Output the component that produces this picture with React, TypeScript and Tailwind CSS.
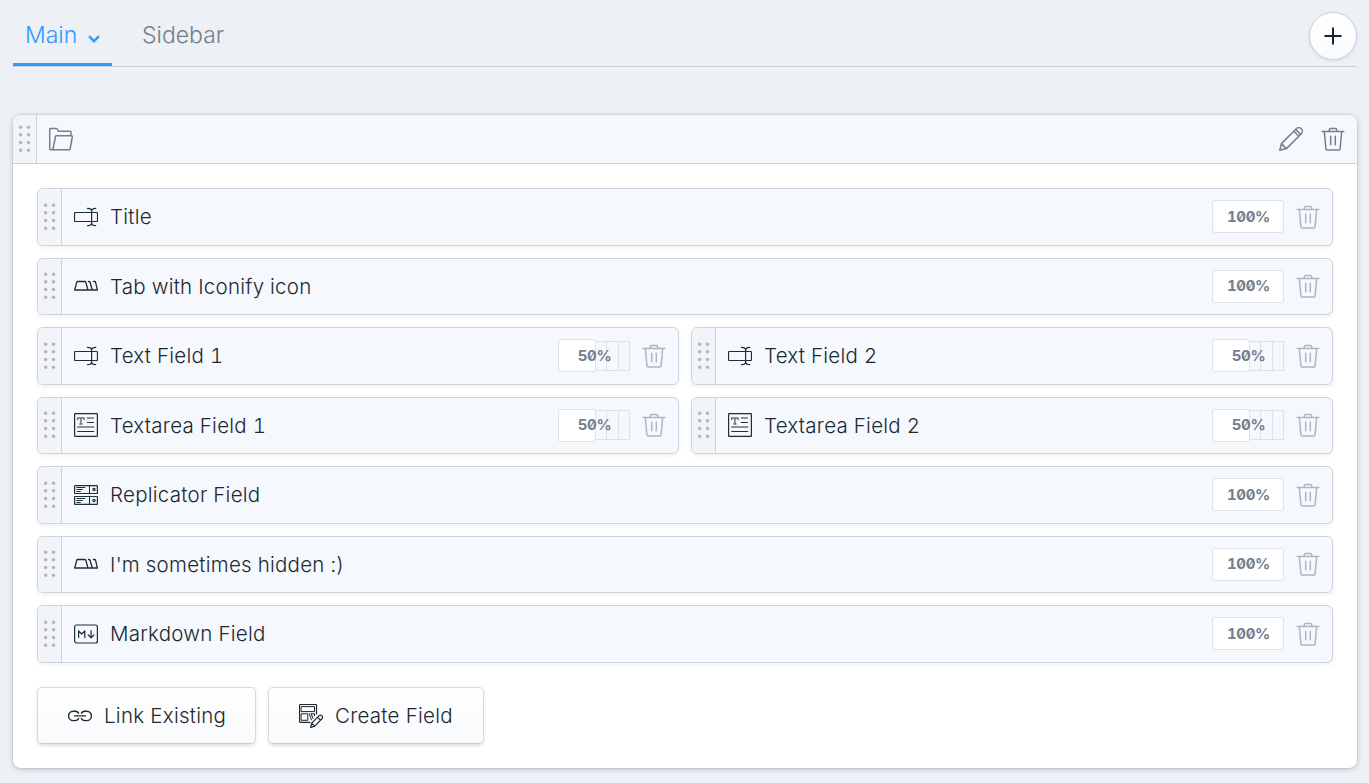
import React from 'react';

type IconProps = { className?: string; children: React.ReactNode };

function Icon({ className = '', children }: IconProps) {
  return (
    <svg
      viewBox="0 0 24 24"
      fill="none"
      stroke="currentColor"
      strokeWidth="1.2"
      strokeLinecap="round"
      strokeLinejoin="round"
      className={`size-6 shrink-0 ${className}`}
    >
      {children}
    </svg>
  );
}

const TextIcon = () => (
  <Icon>
    <path d="M16 16.5H1.5a1 1 0 0 1-1-1v-7a1 1 0 0 1 1-1h21a1 1 0 0 1 1 1v7a1 1 0 0 1-1 1H16M17.6 5.6v12.8" />
    <path d="M13.5 3.4c2.500 0 4.100.8 4.100 2.600 0-1.800 1.600-2.600 4.100-2.600M13.500 20.600c2.500 0 4.100-.8 4.100-2.600 0 1.800 1.600 2.600 4.100 2.600" />
  </Icon>
);

const TabIcon = () => (
  <Icon>
    <path
      strokeWidth="1.300"
      d="M.7 16h22.700L21.600 8.300a1 1 0 0 0-1-.8h-1.200M.7 16 2.700 8.300a1 1 0 0 1 1-.8h7.100a1 1 0 0 1 1 .8l2.200 7.700M14.500 7.500h.5a1 1 0 0 1 1 .8l2.300 7.700"
    />
  </Icon>
);

const TextareaIcon = () => (
  <Icon>
    <rect x=".6" y=".6" width="22.8" height="22.8" rx=".6" />
    <g strokeWidth="1.2">
      <path d="M3.700 6.500V5H10v1.500M6.900 5v6M5.800 11H8M13.400 5h6M3.700 14h16" strokeWidth="1.500" opacity=".65" />
      <path d="M13.400 9.500h6M3.700 18.500h16" />
    </g>
  </Icon>
);

const ReplicatorIcon = () => (
  <Icon>
    <rect x=".6" y="2.600" width="22.800" height="7.900" rx=".6" />
    <rect x=".6" y="13.500" width="22.800" height="7.900" rx=".6" />
    <path
      d="M15.500 2.500v8M15.500 13.500v8M2.800 4.500h8M2.800 6.500h5.500M2.800 8.500h3.500M2.800 15.500h8M2.800 17.500h5.500M2.800 19.500h3.500"
      strokeWidth="1"
    />
    <circle cx="20" cy="6.500" r="1.100" />
    <circle cx="20" cy="17.500" r="1.100" />
  </Icon>
);

const MarkdownIcon = () => (
  <Icon>
    <rect x=".6" y="3" width="22.800" height="18" rx="2" />
    <path d="M4.600 15.600V8.800L7.700 12l3.100-3.200v6.800M17.100 8.500v7.300M14.300 13l2.800 2.800 2.800-2.800" />
  </Icon>
);

const LinkIcon = () => (
  <Icon>
    <path
      strokeWidth="1.400"
      d="M10.600 9.200C9.900 7.900 8.500 7.200 7 7.200H5.300a4.700 4.700 0 0 0 0 9.400H7c1.500 0 2.900-.7 3.600-2M13.400 9.200c.7-1.300 2.100-2 3.600-2h1.700a4.700 4.700 0 0 1 0 9.400H17c-1.500 0-2.900-.7-3.600-2M6.500 11.900h11"
    />
  </Icon>
);

const CreateIcon = () => (
  <Icon>
    <path d="M11 18.400H1.500a1 1 0 0 1-1-1V1.500a1 1 0 0 1 1-1h15a1 1 0 0 1 1 1V10" />
    <path
      d="M2.500 2.600h13v5h-13zM2.500 9.800h6.300v6.500H2.500zM10.400 9.800l2 6M12.300 9.800h3.200v2.100M12.300 9.800l1.500 4.500"
      strokeWidth="1"
    />
    <path d="m11.600 23.300 1.100-4.200 7.300-7.200a2 2 0 0 1 2.900 2.900l-7.200 7.300zM12.700 19.100l3 3M18.600 13.300l2.900 2.900" />
  </Icon>
);

const FolderIcon = () => (
  <Icon className="text-[#737f8c]">
    <path
      strokeWidth="1.500"
      d="M22 8.600V5.200a1 1 0 0 0-1-1H9.200L8.200 2a1 1 0 0 0-.9-.6H1.700a1 1 0 0 0-1 1v19a1.400 1.400 0 0 0 1.400 1.400h18a1 1 0 0 0 1-.8l2.200-12.100a1 1 0 0 0-1-1.200H7.500a1 1 0 0 0-1 .8L4.200 21a2 2 0 0 1-2.200 1.800"
    />
  </Icon>
);

const PencilIcon = () => (
  <Icon className="text-[#737f8c]">
    <path
      d="m.8 23.200 1.600-6.600L17.300 1.700a3.500 3.500 0 0 1 5 5L7.400 21.600zM2.400 16.600l5 5M14.800 4.200l5 5M16.600 2.400l5 5"
      strokeWidth="1.500"
    />
  </Icon>
);

const TrashIcon = ({ className }: { className: string }) => (
  <Icon className={className}>
    <path
      d="M1.200 4.500h21.600M3.300 4.500l1.600 17.200a1.300 1.300 0 0 0 1.300 1.200h11.600a1.300 1.300 0 0 0 1.300-1.200l1.600-17.200M8.300 4.500V2.900a1.300 1.300 0 0 1 1.300-1.300h4.800a1.300 1.300 0 0 1 1.300 1.300v1.600M9.700 9.200v8.600M14.300 9.200v8.600"
      strokeWidth="1.500"
    />
  </Icon>
);

function DragHandle({ card = false }: { card?: boolean }) {
  return (
    <div
      className={`flex w-6 shrink-0 items-center justify-center border-r border-[#cdd2da] bg-[#f1f4f9] ${
        card ? 'rounded-tl-lg' : 'rounded-l-[5px]'
      }`}
    >
      <svg viewBox="0 0 12 28" className="h-7 w-3 text-[#b4b7bb]" fill="currentColor">
        {[2.2, 9.800, 17.500, 25.200].map((y) => (
          <React.Fragment key={y}>
            <circle cx="1.700" cy={y} r="1.750" />
            <circle cx="9.500" cy={y} r="1.750" />
          </React.Fragment>
        ))}
      </svg>
    </div>
  );
}

function WidthSelector({ half = false }: { half?: boolean }) {
  return (
    <div className="relative flex h-[33px] w-[72px] items-center">
      {half && (
        <div className="ml-auto flex h-[30px] w-[35px] border-y border-r border-[#dde2e9]">
          <div className="w-3 border-r border-[#dde2e9]" />
          <div className="w-3 border-r border-[#dde2e9]" />
        </div>
      )}
      <div
        className={`absolute inset-y-0 left-0 rounded-[3px] border border-[#dde2e9] bg-white ${
          half ? 'w-[38px]' : 'w-[72px]'
        }`}
      />
      <div className="absolute inset-0 flex items-center justify-center pl-px text-[15px] font-bold tracking-[-0.3px] text-[#737f8c] [font-feature-settings:'zero','tnum']">
        {half ? '50%' : '100%'}
      </div>
    </div>
  );
}

type FieldProps = { icon: React.ReactNode; label: string; half?: boolean };

function Field({ icon, label, half }: FieldProps) {
  return (
    <div
      className={`flex h-[57.5px] rounded-md border border-[#cdd4dd] bg-[#f5f8fd] shadow-[0_2px_4px_rgba(40,50,70,0.07)] ${
        half ? '' : 'col-span-2'
      }`}
    >
      <DragHandle />
      <div className="flex flex-1 items-center pr-3 pl-3 text-[#1c2e36]">
        {icon}
        <span className="ml-3 pt-[2px] text-[20.5px] font-[350] tracking-[0.26px] text-[#1b2830] tabular-nums">
          {label}
        </span>
        <div className="ml-auto flex items-center gap-3">
          <WidthSelector half={half} />
          <TrashIcon className="text-[#acb6c1]" />
        </div>
      </div>
    </div>
  );
}

const fields: FieldProps[] = [
  { icon: <TextIcon />, label: 'Title' },
  { icon: <TabIcon />, label: 'Tab with Iconify icon' },
  { icon: <TextIcon />, label: 'Text Field 1', half: true },
  { icon: <TextIcon />, label: 'Text Field 2', half: true },
  { icon: <TextareaIcon />, label: 'Textarea Field 1', half: true },
  { icon: <TextareaIcon />, label: 'Textarea Field 2', half: true },
  { icon: <ReplicatorIcon />, label: 'Replicator Field' },
  { icon: <TabIcon />, label: "I'm sometimes hidden :)" },
  { icon: <MarkdownIcon />, label: 'Markdown Field' },
];

function Button({ icon, label, className }: { icon: React.ReactNode; label: string; className: string }) {
  return (
    <button
      className={`flex h-[57px] items-center rounded-[5px] border border-[#d3dce6] border-b-[#c3cdd8] bg-linear-to-b from-white to-[#f8f9fb] pl-[29.5px] text-[20.5px] font-[350] tracking-[0.26px] text-[#1b2830] shadow-[0_1.5px_3px_rgba(40,50,70,0.14)] ${className}`}
    >
      {icon}
      <span className="ml-[12.5px] pt-[2px]">{label}</span>
    </button>
  );
}

export default function App() {
  return (
    <div className="h-[783px] overflow-hidden bg-[#edf0f5] pr-3 pl-[13px] font-['Inter',sans-serif]">
      <div className="flex h-[67px] justify-between border-b border-[#cdd0d8]">
        <nav className="flex h-[66px] text-[23px] font-[350] leading-9">
          <div className="flex w-[99px] border-b-3 border-[#2f9bff] pt-[17px] pl-3 text-[#2f9bff]">
            Main
            <svg
              viewBox="0 0 12 8"
              className="mt-[18px] ml-[11px] h-2 w-3"
              fill="none"
              stroke="currentColor"
              strokeWidth="2.400"
            >
              <path d="M1 1.200 6 6.200l5-5" />
            </svg>
          </div>
          <div className="pt-[17px] pl-[30px] text-[#737f8c]">Sidebar</div>
        </nav>
        <button className="mt-3 flex size-12 items-center justify-center rounded-full border border-[#c9d2dc] bg-linear-to-b from-white to-[#f9fafb] text-[#17242c] shadow-[0_1px_3px_rgba(40,50,70,0.12)]">
          <svg viewBox="0 0 18 18" className="size-[18px]" fill="none" stroke="currentColor" strokeWidth="2">
            <path d="M9 .5v17M.5 9h17" />
          </svg>
        </button>
      </div>

      <section className="mt-12 h-[653px] rounded-lg bg-white shadow-[0_0_0_0.5px_rgba(60,60,100,0.12),0_1px_5px_rgba(60,60,100,0.3)]">
        <header className="flex h-[49px] rounded-t-lg border-b border-[#cdd2da] bg-[#f5f8fd]">
          <DragHandle card />
          <div className="flex flex-1 items-center justify-between pr-3 pl-3">
            <FolderIcon />
            <div className="flex gap-[18px]">
              <PencilIcon />
              <TrashIcon className="text-[#737f8c]" />
            </div>
          </div>
        </header>
        <div className="px-6 pt-6">
          <div className="grid grid-cols-2 gap-3">
            {fields.map((f) => (
              <Field key={f.label} {...f} />
            ))}
          </div>
          <div className="mt-[24.5px] flex gap-3">
            <Button icon={<LinkIcon />} label="Link Existing" className="w-[219px]" />
            <Button icon={<CreateIcon />} label="Create Field" className="w-[216px]" />
          </div>
        </div>
      </section>
    </div>
  );
}
